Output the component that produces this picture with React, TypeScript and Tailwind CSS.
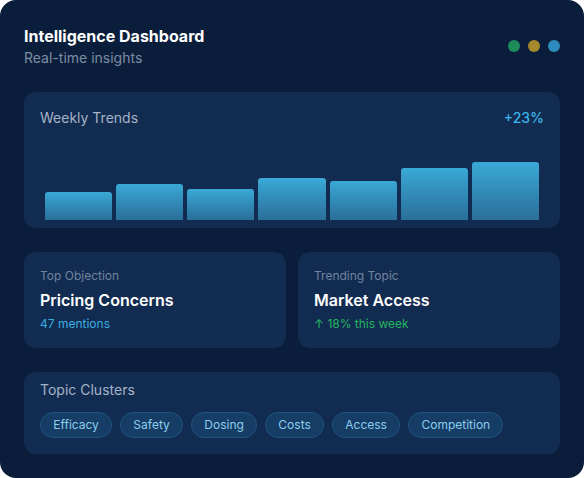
import React from 'react';

const bars = [28, 36, 31, 42, 39, 52, 58];
const topics = ['Efficacy', 'Safety', 'Dosing', 'Costs', 'Access', 'Competition'];

const App: React.FC = () => {
  return (
    <div className="w-[584px] h-[478px] bg-white" style={{ fontFamily: 'Inter, "Noto Sans", sans-serif' }}>
      <div className="w-full h-full rounded-2xl bg-[#0a1e3b] p-6 flex flex-col gap-6">
        {/* header */}
        <div className="flex items-center justify-between">
          <div>
            <h1 className="text-base font-bold text-white leading-6">Intelligence Dashboard</h1>
            <p className="text-sm text-[#7d8ca4] leading-5">Real-time insights</p>
          </div>
          <div className="flex items-center gap-2">
            <span className="w-3 h-3 rounded-full bg-[#1d8b5c]"></span>
            <span className="w-3 h-3 rounded-full bg-[#a68a2c]"></span>
            <span className="w-3 h-3 rounded-full bg-[#2f8bbb]"></span>
          </div>
        </div>

        {/* weekly trends */}
        <div className="bg-[#122c51] rounded-xl px-4 pt-4 pb-2">
          <div className="flex items-center justify-between">
            <span className="text-sm text-[#a5b3c7]">Weekly Trends</span>
            <span className="text-sm font-medium text-[#3cb6ea]">+23%</span>
          </div>
          <div className="mt-3 h-20 flex items-end gap-1 px-[5px]">
            {bars.map((h, i) => (
              <div
                key={i}
                className="flex-1 rounded-t-[3px] bg-gradient-to-b from-[#3aa9d7] to-[#2a6f99]"
                style={{ height: h }}
              />
            ))}
          </div>
        </div>

        {/* stat cards */}
        <div className="grid grid-cols-2 gap-3">
          <div className="bg-[#122c51] rounded-xl p-4">
            <p className="text-xs text-[#71839d]">Top Objection</p>
            <p className="mt-1 text-base font-semibold text-white leading-6">Pricing Concerns</p>
            <p className="mt-1 text-xs text-[#3aaee0]">47 mentions</p>
          </div>
          <div className="bg-[#122c51] rounded-xl p-4">
            <p className="text-xs text-[#71839d]">Trending Topic</p>
            <p className="mt-1 text-base font-semibold text-white leading-6">Market Access</p>
            <p className="mt-1 text-xs text-[#22b462]">↑ 18% this week</p>
          </div>
        </div>

        {/* topic clusters */}
        <div className="bg-[#122c51] rounded-xl px-4 pt-2 pb-4">
          <p className="text-sm text-[#a5b3c7]">Topic Clusters</p>
          <div className="mt-3 flex flex-wrap gap-2">
            {topics.map(t => (
              <span
                key={t}
                className="px-[12.25px] py-1 text-xs rounded-full bg-[#153d66] border border-[#1f5480] text-[#8ccdee]"
              >
                {t}
              </span>
            ))}
          </div>
        </div>
      </div>
    </div>
  );
};

export default App;
